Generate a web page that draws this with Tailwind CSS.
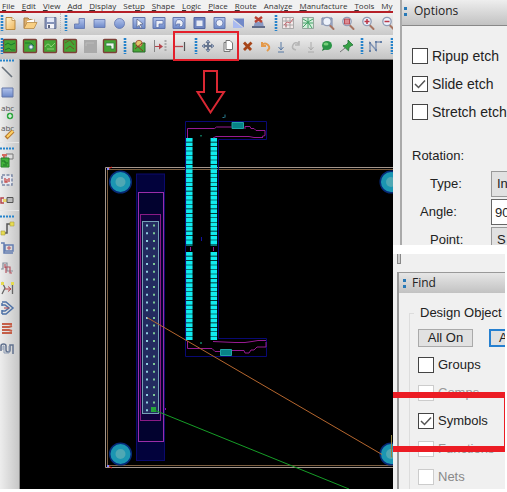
<!DOCTYPE html>
<html lang="en">
<head>
<meta charset="utf-8">
<meta name="viewport" content="width=device-width, initial-scale=1">
<title>PCB Editor</title>
<script src="https://cdn.jsdelivr.net/npm/@tailwindcss/browser@4"></script>
</head>
<body class="bg-white font-['Liberation_Sans',sans-serif] text-[13px] text-[#222]">
<svg class="absolute h-0 w-0" aria-hidden="true">
  <defs>
    <linearGradient id="blue" x1="0" y1="0" x2="0" y2="1"><stop offset="0" stop-color="#b3c4ec"/><stop offset="1" stop-color="#6b87c8"/></linearGradient>
    <linearGradient id="page" x1="0" y1="0" x2="1" y2="1"><stop offset="0" stop-color="#fff3cf"/><stop offset="1" stop-color="#efb65c"/></linearGradient>
    <symbol id="tile" viewBox="0 0 20 20"><rect x="3.5" y="3.5" width="13" height="13" rx="1" fill="#44a535" stroke="#7d4038" stroke-width="1.4"/></symbol>
    <symbol id="lens" viewBox="0 0 20 20"><path d="M11.5 12l4 4" stroke="#a87562" stroke-width="2" stroke-linecap="round"/><circle cx="9" cy="8.5" r="4.2" fill="#edf2fb" stroke="#909cb5" stroke-width="1.3"/></symbol>
    <symbol id="grip" viewBox="0 0 4 18"><path d="M2 1v16" stroke="#2583cb" stroke-width="2.6" stroke-dasharray="2 1"/></symbol>
    <symbol id="hgrip" viewBox="0 0 16 3"><path d="M0 1.5h15" stroke="#2583cb" stroke-width="2" stroke-dasharray="2 1"/></symbol>
  </defs>
</svg>

<div class="relative flex h-screen overflow-hidden pb-[3px]">
  <main class="flex min-w-0 flex-1 flex-col overflow-hidden bg-[#d8d8d8]">
    <nav class="flex h-[11px] shrink-0 items-center gap-[7px] bg-[#f1f1f1] pl-[2px] font-['Open_Sans',sans-serif] text-[8px] leading-[10px] whitespace-nowrap text-[#333]">
      <button><u>F</u>ile</button><button><u>E</u>dit</button><button><u>V</u>iew</button><button><u>A</u>dd</button><button><u>D</u>isplay</button><button>Set<u>u</u>p</button><button><u>S</u>hape</button><button><u>L</u>ogic</button><button><u>P</u>lace</button><button><u>R</u>oute</button><button>Analy<u>z</u>e</button><button><u>M</u>anufacture</button><button><u>T</u>ools</button><button>My</button>
    </nav>

    <div class="flex h-6 shrink-0 items-center border-t-2 border-[#b51f27] bg-linear-to-b from-[#f0f0f0] to-[#c9c9c9] pb-[2px] [&>button]:h-5 [&>button]:w-5 [&>button]:shrink-0 [&_svg]:block" role="toolbar" aria-label="File and shape">
      <div class="relative flex">
        <button class="h-5 w-5" aria-label="New"><svg viewBox="0 0 20 20"><path d="M6 4.500h6l3 3v9H6z" fill="url(#page)" stroke="#b98a42"/><path d="M12 4.500v3h3" fill="#fff" stroke="#b98a42" stroke-width=".8"/></svg></button>
        <svg class="absolute top-[1px] left-0 h-[18px] w-1"><use href="#grip"/></svg>
      </div>
      <button aria-label="Open"><svg viewBox="0 0 20 20"><path d="M4 15V5h4l1.500 1.500H14V9" fill="#d9ad6c" stroke="#a77b43"/><path d="M7 8l7-2v4H7z" fill="#fff"/><path d="M4 15.500l3-6h10l-3 6z" fill="#f8cf83" stroke="#b78a48" stroke-width=".8"/></svg></button>
      <button aria-label="Save"><svg viewBox="0 0 20 20"><path d="M5 4.500h11v11H5z" fill="#8593b8" stroke="#6c7798"/><path d="M7 4.500h7v4.500H7z" fill="#e4e9f7"/><path d="M7 11h7v4.500H7z" fill="#f4f4f8"/><path d="M8 12h2v3H8z" fill="#5d6580"/></svg></button>
      <span class="flex h-5 w-[10px] shrink-0 items-center justify-center border-l border-dotted border-[#bbb]"><svg class="h-[18px] w-1"><use href="#grip"/></svg></span>
      <button aria-label="Shape polygon"><svg viewBox="0 0 20 20"><path d="M9 5.500h5.500v10h-10V11H9z" fill="url(#blue)" stroke="#6074ac" stroke-width=".8"/></svg></button>
      <button aria-label="Shape rectangle"><svg viewBox="0 0 20 20"><path d="M4 6.500h11v8H4z" fill="url(#blue)" stroke="#6074ac" stroke-width=".8"/></svg></button>
      <button aria-label="Shape circle"><svg viewBox="0 0 20 20"><circle cx="9.500" cy="10.500" r="5" fill="url(#blue)" stroke="#6074ac" stroke-width=".8"/></svg></button>
      <button aria-label="Select shape"><svg viewBox="0 0 20 20"><path d="M3 4.500h12v11H3z" fill="url(#blue)" stroke="#6074ac"/><path d="M7 6l6 5-3 .5 2 3-1.500.8-1.500-3-2 2z" fill="#fff" stroke="#545f80" stroke-width=".7"/></svg></button>
      <button aria-label="Void polygon"><svg viewBox="0 0 20 20"><path d="M3 4.500h12v11H3z" fill="url(#blue)" stroke="#6074ac"/><path d="M6 14.500V7.500h7V11H9v3.500z" fill="#edf0f8" stroke="#6074ac" stroke-width=".8"/></svg></button>
      <button aria-label="Void freeform"><svg viewBox="0 0 20 20"><path d="M3 4.500h12v11H3z" fill="url(#blue)" stroke="#6074ac"/><path d="M6 13q-1.500-7 4-6.500 5 2 2 7l-3 .5 1-3H7z" fill="#edf0f8" stroke="#6074ac" stroke-width=".8"/></svg></button>
      <button aria-label="Void rectangle"><svg viewBox="0 0 20 20"><path d="M4 4.500h11v11H4z" fill="#7187c1" stroke="#5164a0"/><path d="M6.500 7.500h6v5.500h-6z" fill="#e8ebf4"/></svg></button>
      <button aria-label="Void circle"><svg viewBox="0 0 20 20"><path d="M4 4.500h11v11H4z" fill="url(#blue)" stroke="#6074ac"/><circle cx="9.500" cy="10" r="3.500" fill="#eceff8" stroke="#6074ac" stroke-width=".8"/></svg></button>
      <button aria-label="Void element"><svg viewBox="0 0 20 20"><path d="M3 5.500h11v9z" fill="#7289c8"/><path d="M3 7v8h10z" fill="#a9baf0"/></svg></button>
      <button aria-label="Delete islands"><svg viewBox="0 0 20 20"><path d="M5 9h8l1 6H3z" fill="#8999c3"/><path d="M2 14h13" stroke="#5f6b89" stroke-width="2"/><path d="M5 4l7 5M12 4l-7 5" stroke="#b84132" stroke-width="2.500"/></svg></button>
      <span class="flex h-5 w-2 shrink-0 items-center justify-end"><svg class="h-[18px] w-1"><use href="#grip"/></svg></span>
      <button aria-label="Grid"><svg viewBox="0 0 20 20"><path d="M4.500 4.500h11v11h-11zM8 5v10M12 5v10M5 8h10M5 12h10" fill="#f4e9e9" stroke="#9a9a9a" stroke-width=".8"/><path d="M6 12l3-3 3 1 3-4M8 14v-3" stroke="#c86f77" fill="none"/></svg></button>
      <button aria-label="Ratsnest"><svg viewBox="0 0 20 20"><path d="M4.500 4.500h11v11h-11z" fill="#d5eedc" stroke="#81958a" stroke-width=".8"/><path d="M5 6l5 3 5-3M5 14l5-5 4 6M10 5v10M5 10h10" stroke="#43a366" fill="none"/></svg></button>
      <button aria-label="Zoom window"><svg viewBox="0 0 20 20"><path d="M4 12V5h10v9" fill="#b9c6e1" stroke="#7483a8"/><use href="#lens"/></svg></button>
      <button aria-label="Zoom fit"><svg viewBox="0 0 20 20"><use href="#lens"/><path d="M6.500 6h5v5h-5z" fill="#dc8b91" stroke="#b84a55"/></svg></button>
      <button aria-label="Zoom in"><svg viewBox="0 0 20 20"><use href="#lens"/><path d="M6.500 8.500h5M9 6v5" stroke="#b93545" stroke-width="1.500"/></svg></button>
      <button aria-label="Zoom out"><svg viewBox="0 0 20 20"><use href="#lens"/><path d="M6.500 8.500h5" stroke="#b93545" stroke-width="1.500"/></svg></button>
    </div>

    <div class="flex h-6 shrink-0 items-center border-t border-[#eee] bg-linear-to-b from-[#ececec] to-[#c4c4c4] pb-[3px] [&>button]:h-5 [&>button]:w-5 [&>button]:shrink-0 [&_svg]:block" role="toolbar" aria-label="Edit">
      <div class="relative flex">
        <button class="h-5 w-5" aria-label="Layout mode"><svg viewBox="0 0 20 20"><use href="#tile"/><path d="M5 9l3-2 3 2 4-2M5 14l4-2 2 2h4" stroke="#187a2c" fill="none"/></svg></button>
        <svg class="absolute top-[1px] left-0 h-[18px] w-1"><use href="#grip"/></svg>
      </div>
      <button aria-label="Via mode"><svg viewBox="0 0 20 20"><use href="#tile"/><path d="M5 7h6l3 3" stroke="#187a2c" fill="none"/><circle cx="11" cy="11" r="2.200" fill="#e8f4ed" stroke="#416c8d"/></svg></button>
      <button aria-label="Etch mode"><svg viewBox="0 0 20 20"><use href="#tile"/><path d="M5 11q3-6 6 0l4-4M7 13h7" stroke="#8fd075" fill="none"/></svg></button>
      <button aria-label="Placement mode"><svg viewBox="0 0 20 20"><use href="#tile"/><path d="M5 7l5-3 4 5M6 13l4-3 4 3" stroke="#6b5a24" fill="none"/></svg></button>
      <button aria-label="Unavailable mode" disabled><svg viewBox="0 0 20 20"><path d="M4 4h13v13H4z" fill="#aaa"/><path d="M6 10V7h8" stroke="#bbb" fill="none"/></svg></button>
      <button aria-label="Shape mode"><svg viewBox="0 0 20 20"><use href="#tile"/><path d="M6 7h8v6h-3v-3H6z" fill="#eef5ee" stroke="#348044" stroke-width=".8"/></svg></button>
      <span class="flex h-5 w-[10px] shrink-0 items-center justify-center"><svg class="h-[18px] w-1"><use href="#grip"/></svg></span>
      <button aria-label="Place component"><svg viewBox="0 0 20 20"><path d="M3 7h12v9H3z" fill="#48a838" stroke="#28672a"/><circle cx="9" cy="7.500" r="3.200" fill="#e2c66c" stroke="#ad6045"/><path d="M5 13l7-6M6 9l7 6" stroke="#853b25"/></svg></button>
      <button aria-label="Spacing"><svg viewBox="0 0 20 20"><path d="M4.500 4v12" stroke="#888"/><path d="M15.500 4v12" stroke="#aaa" stroke-width="2" stroke-dasharray="2 1"/><path d="M5 10.500h7" stroke="#b4434a"/><path d="M9 7.500l4 3-4 3z" fill="#b4434a"/></svg></button>
      <button aria-label="Slide"><svg viewBox="0 0 20 20"><path d="M5 10.500h8" stroke="#b34a50" stroke-width="1.300"/><path d="M14.500 6v9" stroke="#555" stroke-width="1.200"/></svg></button>
      <span class="flex h-5 w-2 shrink-0 items-center justify-end"><svg class="h-[18px] w-1"><use href="#grip"/></svg></span>
      <button aria-label="Move"><svg viewBox="0 0 20 20"><path d="M10 5v10M5 10h10" stroke="#65748e" stroke-width="2"/><path d="M10 4L8 6.500h4zM10 16l-2-2.500h4zM4 10l2.500-2v4zM16 10l-2.500-2v4z" fill="#aab8d1" stroke="#5f6f8b" stroke-width=".8"/></svg></button>
      <button aria-label="Copy"><svg viewBox="0 0 20 20"><path d="M6 6.500h6v9H6z" fill="#eee" stroke="#777"/><path d="M8 4.500h4l2.500 2.500v6.500H8z" fill="#fff" stroke="#777"/></svg></button>
      <button aria-label="Delete"><svg viewBox="0 0 20 20"><path d="M6 6.500l7 7.500M13.500 6.500L6 14" stroke="#a64519" stroke-width="2.800"/></svg></button>
      <span class="flex h-5 shrink-0 [&>button]:w-[15px]">
        <button aria-label="Undo"><svg viewBox="0 0 15 20"><path d="M4 6v4h4M4 9q3-3 6 0t-1 6" stroke="#e49a4b" stroke-width="2" fill="none"/></svg></button>
        <button aria-label="Undo list"><svg viewBox="0 0 15 20"><path d="M8 6v7M5.500 11L8 14l2.500-3M5 16h6" stroke="#5778a4" fill="none"/></svg></button>
        <button aria-label="Redo" disabled><svg viewBox="0 0 15 20"><path d="M11 5v4H7M11 8Q7 5 5 9t3 5" stroke="#b5b5b5" stroke-width="1.600" fill="none"/></svg></button>
        <button aria-label="Redo list" disabled><svg viewBox="0 0 15 20"><path d="M8 6v7M5.500 11L8 14l2.500-3M5 16h6" stroke="#aaa" fill="none"/></svg></button>
      </span>
      <button aria-label="Balloon"><svg viewBox="0 0 20 20"><path d="M5 12l-1 3 4-2z" fill="#26723a"/><ellipse cx="9" cy="9.500" rx="5" ry="4.500" fill="#299445"/><ellipse cx="8" cy="8" rx="2.500" ry="1.500" fill="#75ce79"/></svg></button>
      <button aria-label="Pin"><svg viewBox="0 0 20 20"><path d="M7 12l-5 4" stroke="#777"/><path d="M10 4l5 5-2 .8-2 2-.5 3-5.500-5 3-.8 2-2z" fill="#35a144" stroke="#23723a" stroke-width=".8"/></svg></button>
      <span class="flex h-5 w-2 shrink-0 items-center justify-center"><svg class="h-[18px] w-1"><use href="#grip"/></svg></span>
      <button aria-label="Connect"><svg viewBox="0 0 20 20"><path d="M4 15V7l6 7V6h5" stroke="#8295b5" stroke-width="1.500" fill="none"/><path d="M3 14h2v2H3zM3 6h2v2H3zM9 13h2v2H9zM9 5h2v2H9zM14 5h2v2h-2z" fill="#6680a6"/></svg></button>
      <span class="flex h-5 w-2 shrink-0 items-center justify-end"><svg class="h-[18px] w-1"><use href="#grip"/></svg></span>
    </div>

    <div class="flex min-h-0 flex-1">
      <aside class="flex w-5 shrink-0 flex-col border-r border-[#888] bg-linear-to-r from-[#ededed] to-[#c7c7c7] [&>button]:h-5 [&>button]:w-[15px] [&>button]:shrink-0 [&>svg]:shrink-0 [&_svg]:block" aria-label="Tools">
        <svg class="h-[3px] w-4"><use href="#hgrip"/></svg>
        <button aria-label="Line"><svg viewBox="0 0 15 20"><path d="M2 5l10 10" stroke="#68717b" stroke-width="1.600"/></svg></button>
        <button aria-label="Rectangle"><svg viewBox="0 0 15 20"><path d="M2 6h11v9H2z" fill="url(#blue)" stroke="#6477a8"/></svg></button>
        <button aria-label="Add text"><svg viewBox="0 0 15 20"><text x="1" y="9" font-family="Open Sans, sans-serif" font-size="8" fill="#555">abc</text><circle cx="10" cy="14" r="3.200" fill="#30a640"/><path d="M8 14h4M10 12v4" stroke="#fff" stroke-width="1.200"/></svg></button>
        <button aria-label="Edit text"><svg viewBox="0 0 15 20"><text x="1" y="9" font-family="Open Sans, sans-serif" font-size="8" fill="#555">abc</text><path d="M6 16l7-7" stroke="#b67831" stroke-width="4"/><path d="M7 15l6-6" stroke="#ffd365" stroke-width="2"/></svg></button>
        <span class="flex h-2 shrink-0 items-end border-t border-[#e5e5e5]"><svg class="h-[3px] w-4"><use href="#hgrip"/></svg></span>
        <button aria-label="Place part"><svg viewBox="0 0 15 20"><path d="M6 4h7v5H6z" fill="#ddd" stroke="#777"/><path d="M2 5h5M4 4v5" stroke="#d56a5e" stroke-width="2"/><path d="M1 8h8v9H1z" fill="#42b33b" stroke="#26812b"/><path d="M2 11h3v2h3M3 15h4" stroke="#1d7028" fill="none"/></svg></button>
        <button aria-label="Swap part"><svg viewBox="0 0 15 20"><path d="M2 5h10v10H2z" fill="#e4e7ef" stroke="#7b88a5" stroke-width="1.500" stroke-dasharray="3 1.500"/><path d="M5 8v4h2V9M9 8v4" stroke="#c64c4a" stroke-width="1.300" fill="none"/></svg></button>
        <button aria-label="Swap pins"><svg viewBox="0 0 15 20"><path d="M4 8H1v5h3" stroke="#b5454c" stroke-width="1.500" fill="none"/><path d="M3 9h5v3H3z" fill="#e8d36b"/><path d="M7 7.500h6v5H7z" fill="#bbb" stroke="#555"/></svg></button>
        <span class="flex h-2 shrink-0 items-end border-t border-[#e5e5e5]"><svg class="h-[3px] w-4"><use href="#hgrip"/></svg></span>
        <button aria-label="Add connect"><svg viewBox="0 0 15 20"><path d="M3 15h4V6h5" stroke="#555" stroke-width="1.500" fill="none"/><path d="M1 13h4v4H1zM10 4h4v4h-4z" fill="#e7dc52" stroke="#aaa03f" stroke-width=".6"/></svg></button>
        <button aria-label="Slide route"><svg viewBox="0 0 15 20"><path d="M1 5h3v10h9M5 7h8v6H5z" fill="none" stroke="#647eb1" stroke-width="1.500"/><path d="M7 10h4M9 8v4" stroke="#b45561"/></svg></button>
        <button aria-label="Delay tune"><svg viewBox="0 0 15 20"><path d="M1 11h2V5h4v8h6" fill="none" stroke="#858b98" stroke-width="1.200"/><path d="M5 10V6M6 15V9h4v6h2" fill="none" stroke="#b65561" stroke-width="1.200"/></svg></button>
        <button aria-label="Custom smooth"><svg viewBox="0 0 15 20"><path d="M2 4l3 6-3 6M12.500 5v11" stroke="#666" fill="none" stroke-width="1.300"/><path d="M5 11h6M8 8.500l3 2.500-3 2.500" stroke="#b94545" fill="none"/><path d="M1 4h3v3H1zM11 4h3v3h-3z" fill="#e5db52"/></svg></button>
        <button aria-label="Route"><svg viewBox="0 0 15 20"><path d="M2 4h4l7 6-7 6H2M2 7h3l4 3-4 3H2M2 5v3M2 12v4" stroke="#4f72a6" fill="none" stroke-width="1.500"/><path d="M4 10h5" stroke="#b3434b"/></svg></button>
        <button aria-label="Spread"><svg viewBox="0 0 15 20"><path d="M2 6h10M2 9h7l3-1M2 12h7l3 1M2 15h10" stroke="#c55f49" stroke-width="2" fill="none"/></svg></button>
        <button aria-label="Phase tune"><svg viewBox="0 0 15 20"><path d="M1 13V8q0-2 2.500-2T6 8v4q0 2 2 2t2-2V7h3v9" stroke="#61718e" fill="none" stroke-width="1.500"/><path d="M3 12V8h1v7h5V8" stroke="#8b9ab2" fill="none"/></svg></button>
      </aside>

      <svg class="block h-full min-w-0 flex-1 bg-black" viewBox="20 59 373 430" preserveAspectRatio="xMinYMin slice" role="img" aria-label="Board layout">
        <path d="M20 59.500h373" stroke="#777"/>
        <g fill="none">
          <path d="M393 167.500H105.500v300H393" stroke="#a3968c"/>
          <path d="M393 169.500H107.500v296H393" stroke="#7b5e41"/>
        </g>
        <path d="M108 169l4-2M108 466l4 2" stroke="#d22" />
        <path d="M107 168h2v2h-2zM107 465h2v2h-2z" fill="#88f"/>
        <g fill="#1b96b2" stroke="#062a78" stroke-width="1.500"><circle cx="120.500" cy="182" r="10.800"/><circle cx="391" cy="182" r="10.800"/><circle cx="120.500" cy="454" r="10.800"/><circle cx="391" cy="454" r="10.800"/></g>
        <g fill="#4fa8b4"><circle cx="120.500" cy="182" r="5"/><circle cx="391" cy="182" r="5"/><circle cx="120.500" cy="454" r="5"/><circle cx="391" cy="454" r="5"/></g>
        <rect x="136.500" y="174" width="28" height="286.500" fill="#02023c" stroke="#0a0a6c"/>
        <rect x="138.500" y="192.500" width="25" height="249" fill="#02022f" stroke="#9b2da9"/>
        <rect x="140.500" y="214.500" width="20" height="206" fill="#10023c" stroke="#8a1b86"/>
        <rect x="142.500" y="221.500" width="16" height="192" fill="#232b60" stroke="#75a0b6"/>
        <path d="M147 224.500v187" stroke="#91cee0" stroke-width="2" stroke-dasharray="2 5.700"/>
        <path d="M154 224.500v187" stroke="#7bc795" stroke-width="2" stroke-dasharray="2 5.700"/>
        <path d="M151 407h5v5h-5z" fill="#25a63b"/>
        <path d="M165.500 408v2" stroke="#90a"/>
        <path d="M185.500 121.500h81v18h-48v199h48v18h-81z" fill="none" stroke="#090974"/>
        <g stroke="#10eaf0" stroke-width="6.500" stroke-dasharray="3.850 .6">
          <path d="M189.300 138v107.500M189.300 252v88M213.800 138v107.500M213.800 252v88"/>
        </g>
        <g fill="none" stroke="#981a92">
          <path d="M187.500 138v-9.500h27l2-1.500h15M245 129v-2.500h5l1 2h3l2 2h9v5l-3 1M213 138l3-1.500h33l5 1h9M190.500 247v4M213.500 247v4"/>
          <path d="M187.500 341v7.500H212l3 3h5M232 350.500h12l1 2.500h4l2-3h3l3-3h9v-5M213 341.500l22 1h10l7-1 6-1h8"/>
        </g>
        <path d="M232 122.500h11.500v6H232zM220.500 349.500h11v6h-11z" fill="#078387" stroke="#20a6a5"/>
        <path d="M201 135v1.500M201 342v2" stroke="#1dc99d"/>
        <path d="M222.500 117.500h2M225 114.500v3" stroke="#297c91"/>
        <path d="M201.500 237v4" stroke="#1313a0"/>
        <path d="M147 317.500L382 454.500" stroke="#b5662e"/>
        <path d="M154 410L349 489" stroke="#169d27"/>
        <path d="M391.500 435v22h1" stroke="#8f8541" fill="none"/>
        <path d="M204 71h13v21h7l-13.500 20.500L197.500 92h6.500z" fill="none" stroke="#da2833" stroke-width="2"/>
      </svg>
    </div>
  </main>

  <div class="flex w-[114px] shrink-0 flex-col overflow-hidden">
    <section class="h-[245px] shrink-0 overflow-hidden bg-[#f0f0f0] pl-[7px]" aria-label="Options">
      <div class="h-full border-l-2 border-[#aaa]">
        <h2 class="flex h-[26px] items-center gap-[7px] border-b border-[#888] bg-linear-to-b from-[#eee] to-[#c2c2c2] pb-1 pl-[2px] font-['Open_Sans',sans-serif] text-[12px]"><svg class="h-3 w-[3px] shrink-0" viewBox="0 0 3 12"><path d="M0 2h3v3H0zM0 8h3v3H0z" fill="#2779b7"/></svg>Options</h2>
        <div class="pt-4 pl-[10px] whitespace-nowrap">
          <label class="flex h-7 items-center gap-1 text-[14px]"><input type="checkbox" class="h-4 w-4 shrink-0 appearance-none border border-[#444] bg-white">Ripup etch</label>
          <label class="flex h-7 items-center gap-1 text-[14px]"><span class="relative flex shrink-0"><input type="checkbox" checked class="h-4 w-4 appearance-none border border-[#444] bg-white"><svg class="pointer-events-none absolute inset-0 h-4 w-4" viewBox="0 0 16 16"><path d="M3 8l3.500 3.500L13 4.500" fill="none" stroke="#555" stroke-width="1.500"/></svg></span>Slide etch</label>
          <label class="flex h-7 items-center gap-1 text-[14px]"><input type="checkbox" class="h-4 w-4 shrink-0 appearance-none border border-[#444] bg-white">Stretch etch</label>
          <h3 class="mt-4 flex h-7 items-center">Rotation:</h3>
          <div class="flex h-7 items-center"><label for="type" class="w-[79px] shrink-0 pl-[18px]">Type:</label><select id="type" class="h-[26px] w-20 shrink-0 appearance-none border border-[#999] bg-[#e1e1e1] pl-[5px]"><option>In</option></select></div>
          <div class="flex h-7 items-center"><label for="angle" class="w-[79px] shrink-0 pl-2">Angle:</label><input id="angle" type="text" value="90" class="h-[26px] w-20 shrink-0 border border-[#666] bg-white pl-[3px]"></div>
          <div class="flex h-7 items-center"><label for="point" class="w-[79px] shrink-0 pl-[18px]">Point:</label><select id="point" class="h-[26px] w-20 shrink-0 appearance-none border border-[#999] bg-[#e1e1e1] pl-[5px]"><option>S</option></select></div>
        </div>
      </div>
    </section>

    <section class="mt-[9px] mr-[2px] flex min-h-0 flex-1 flex-col overflow-hidden bg-[#f0f0f0] pl-1" aria-label="Find">
      <div class="h-[10px] w-1 shrink-0 border-x border-b border-[#888] bg-[#ccc]"></div>
      <div class="mt-2 min-h-0 flex-1 border-t border-l-2 border-[#999]">
        <h2 class="flex h-5 items-center gap-[6px] bg-linear-to-b from-[#e6e6e6] to-[#c2c2c2] pl-1 font-['Open_Sans',sans-serif] text-[12px]"><svg class="h-3 w-[3px] shrink-0" viewBox="0 0 3 12"><path d="M0 2h3v3H0zM0 8h3v3H0z" fill="#2779b7"/></svg>Find</h2>
        <fieldset class="mt-3 ml-[10px] h-full min-w-0 border-t border-l border-[#ddd] pl-2 whitespace-nowrap">
          <legend class="ml-[-4px] px-[6px] leading-4">Design Object</legend>
          <div class="mt-2 mb-1 flex gap-4">
            <button class="h-[18px] w-[55px] shrink-0 border border-[#aaa] bg-[#e1e1e1] leading-4">All On</button>
            <button class="h-[18px] w-[55px] shrink-0 border-2 border-[#2680d0] bg-[#e1e1e1] pl-2 text-left leading-[14px]">A</button>
          </div>
          <label class="flex h-7 items-center gap-1"><input type="checkbox" class="h-4 w-4 shrink-0 appearance-none border border-[#444] bg-white">Groups</label>
          <label class="flex h-7 items-center gap-1 text-[#999]"><input type="checkbox" disabled class="h-4 w-4 shrink-0 appearance-none border border-[#ccc] bg-white">Comps</label>
          <label class="flex h-7 items-center gap-1"><span class="relative flex shrink-0"><input type="checkbox" checked class="h-4 w-4 appearance-none border border-[#444] bg-white"><svg class="pointer-events-none absolute inset-0 h-4 w-4" viewBox="0 0 16 16"><path d="M3 8l3.500 3.500L13 4.500" fill="none" stroke="#555" stroke-width="1.500"/></svg></span>Symbols</label>
          <label class="flex h-7 items-center gap-1 text-[#999]"><input type="checkbox" disabled class="h-4 w-4 shrink-0 appearance-none border border-[#ccc] bg-white">Functions</label>
          <label class="flex h-7 items-center gap-1 text-[#888]"><input type="checkbox" disabled class="h-4 w-4 shrink-0 appearance-none border border-[#ccc] bg-white">Nets</label>
        </fieldset>
      </div>
    </section>
  </div>

  <div class="pointer-events-none absolute top-[31px] left-[173px] h-[30px] w-[66px] border-2 border-[#e41f2b]"></div>
  <div class="pointer-events-none absolute top-[392px] right-[2px] h-[60px] w-28 border-y-6 border-r border-[#ec1c24]"></div>
</div>
</body>
</html>
